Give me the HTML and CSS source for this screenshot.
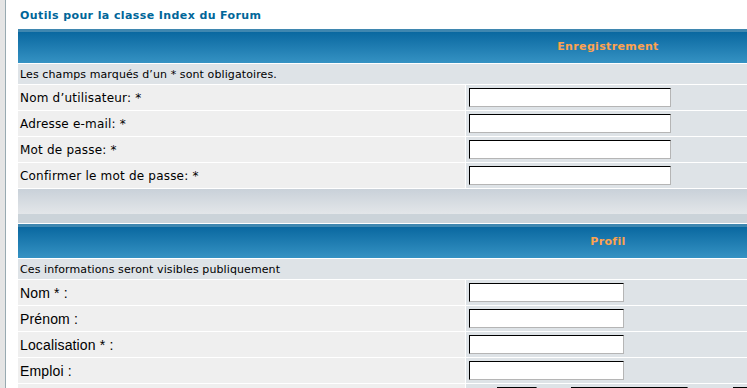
FILE: index.html
```html
<!DOCTYPE html>
<html lang="fr">
<head>
<meta charset="utf-8">
<title>Enregistrement</title>
<link rel="stylesheet" href="styles.css">
</head>
<body>
<div class="bodyline">
  <div class="nav">Outils pour la classe Index du Forum</div>
  <table class="forumline">
    <tr><th colspan="2" class="th">Enregistrement</th></tr>
    <tr><td colspan="2" class="row2 gensmall">Les champs marqués d’un * sont obligatoires.</td></tr>
    <tr><td class="row1 gen">Nom d’utilisateur: *</td><td class="row2"><input class="post wide" type="text"></td></tr>
    <tr><td class="row1 gen">Adresse e-mail: *</td><td class="row2"><input class="post wide" type="text"></td></tr>
    <tr><td class="row1 gen">Mot de passe: *</td><td class="row2"><input class="post wide" type="password"></td></tr>
    <tr><td class="row1 gen">Confirmer le mot de passe: *</td><td class="row2"><input class="post wide" type="password"></td></tr>
    <tr><td colspan="2" class="catBottom"></td></tr>
    <tr><th colspan="2" class="th">Profil</th></tr>
    <tr><td colspan="2" class="row2 gensmall">Ces informations seront visibles publiquement</td></tr>
    <tr><td class="row1 alt">Nom * :</td><td class="row2"><input class="post narrow" type="text"></td></tr>
    <tr><td class="row1 alt">Prénom :</td><td class="row2"><input class="post narrow" type="text"></td></tr>
    <tr><td class="row1 alt">Localisation * :</td><td class="row2"><input class="post narrow" type="text"></td></tr>
    <tr><td class="row1 alt">Emploi :</td><td class="row2"><input class="post narrow" type="text"></td></tr>
    <tr><td class="row1 alt"></td><td class="row2 top"><div class="dates"><span class="sel s1"></span><span class="sel s2"></span><span class="sel s3"></span></div></td></tr>
  </table>
</div>
</body>
</html>
```

FILE: styles.css
```css
html { overflow: hidden; }
body {
  margin: 0;
  padding-left: 5px;
  background: #e5e5e5;
  font-family: "DejaVu Sans", Verdana, sans-serif;
  color: #000;
}
.bodyline {
  background: #fff;
  border-left: 1px solid #98aab1;
  padding-left: 11px;
  width: 1200px;
}
.nav {
  font-size: 11px;
  font-weight: bold;
  letter-spacing: 0.4px;
  color: #006699;
  line-height: 14px;
  padding: 9px 0 5px 3px;
}
.forumline {
  border-collapse: separate;
  border-spacing: 1px;
  width: 1182px;
  background: #fff;
}
.forumline td, .forumline th { padding: 0; }
.th {
  height: 34px;
  color: #ffa34f;
  font-size: 11px;
  font-weight: bold;
  letter-spacing: 0.35px;
  text-align: center;
  background: linear-gradient(#3f87b0 0, #3f87b0 3px, #0a68a0 3px, #3592c3 100%);
}
.forumline .row1 { background: #efefef; width: 445px; height: 25px; padding-left: 2px; }
.row2 { background: #dee3e7; }
.forumline .gensmall { font-size: 11px; letter-spacing: 0.1px; height: 20px; padding-left: 2px; }
.gen { font-size: 12px; letter-spacing: 0.2px; }
.alt { font-family: "Liberation Sans", Arial, sans-serif; font-size: 14px; letter-spacing: 0.15px; }
.top { vertical-align: top; }
.post {
  display: block;
  box-sizing: border-box;
  height: 19px;
  margin-left: 3px;
  padding: 0;
  background: #fff;
  border-style: solid;
  border-width: 1px;
  border-color: #000 #b5b5b5 #b5b5b5 #000;
}
.wide { width: 202px; }
.narrow { width: 155px; }
.catBottom {
  height: 34px;
  background: linear-gradient(#c9d1d9 0, #e3e6e9 25px, #cbd3d9 25px, #cbd3d9 100%);
}
.dates { display: flex; padding-top: 3px; height: 22px; }
.sel {
  display: block;
  height: 19px;
  box-sizing: border-box;
  border: 1px solid #b5b5b5;
  border-top-color: #000;
  border-left-color: #000;
  background: #fff;
}
.s1 { width: 40px; margin-left: 31px; }
.s2 { width: 117px; margin-left: 34px; }
.s3 { width: 60px; margin-left: 45px; }
```
